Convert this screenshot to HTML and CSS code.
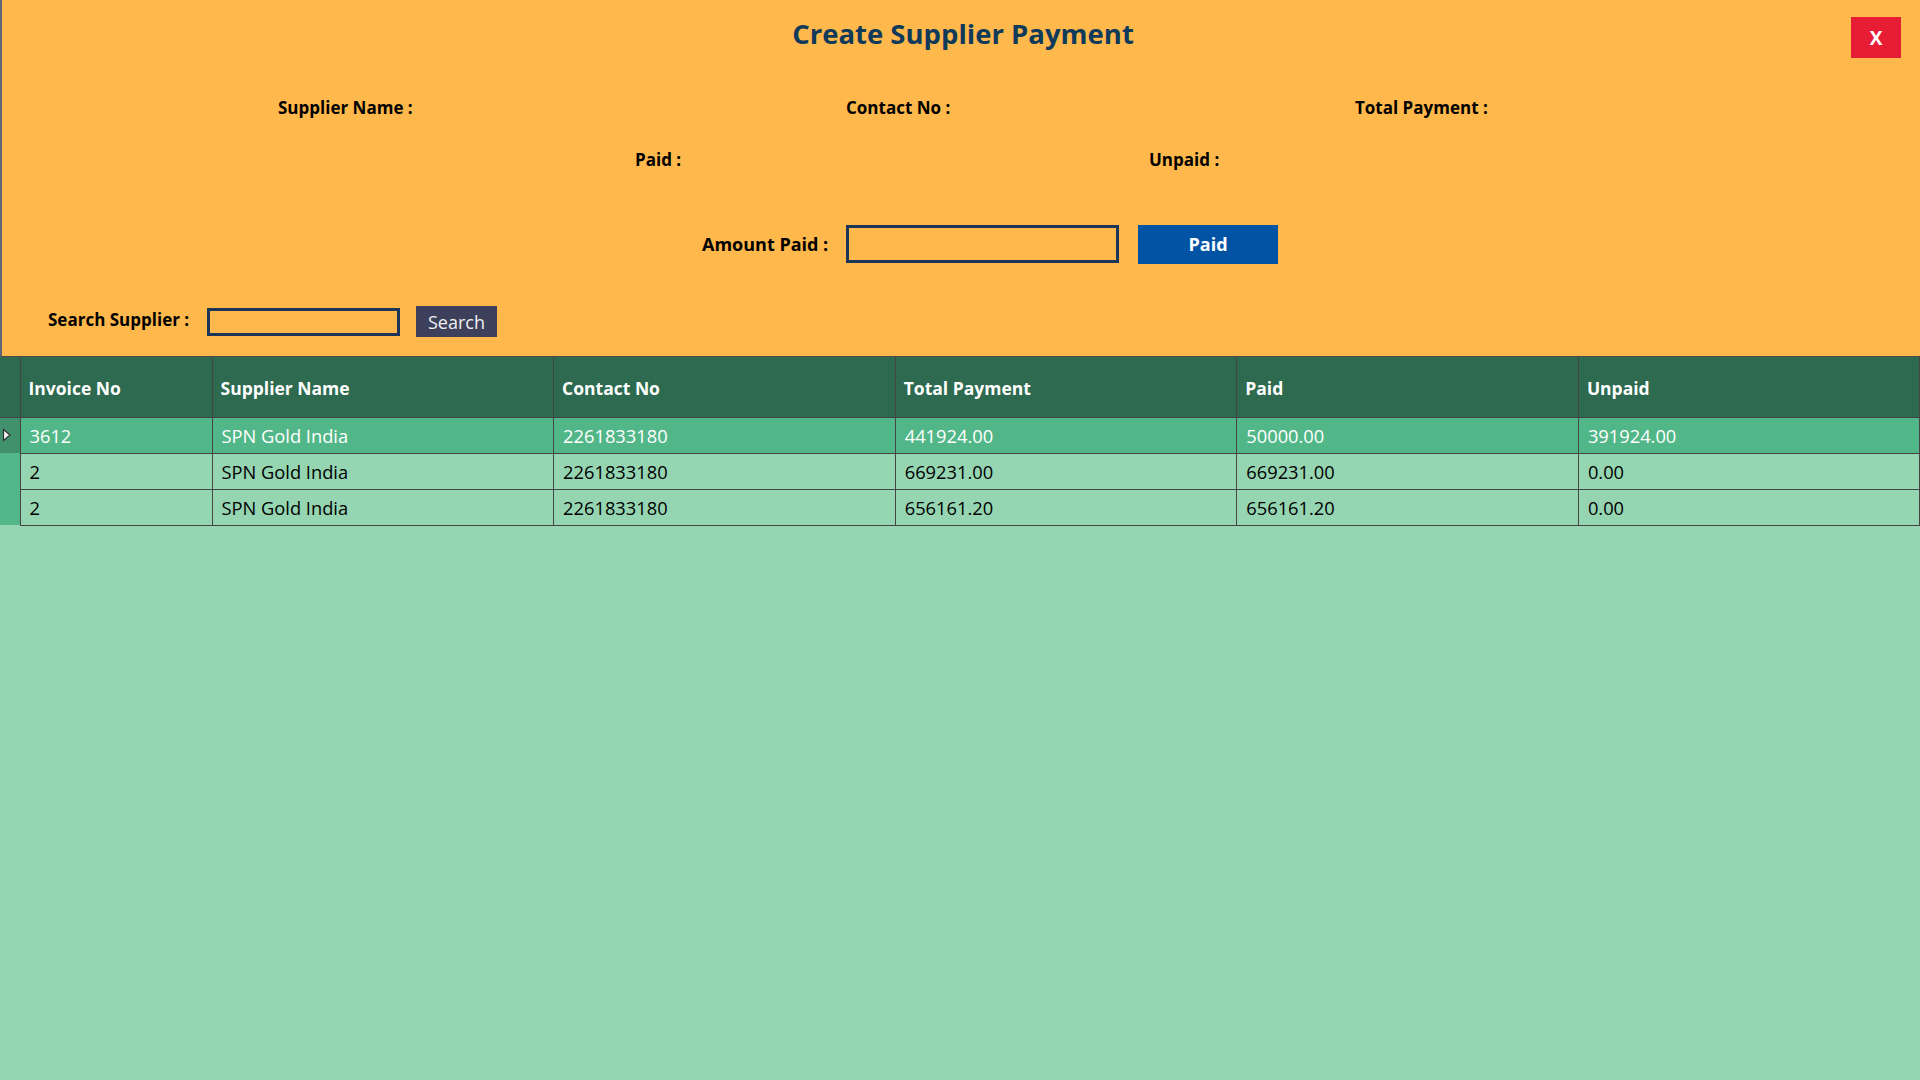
FILE: index.html
```html
<!DOCTYPE html>
<html lang="en">
<head>
<meta charset="utf-8">
<title>Create Supplier Payment</title>
<link rel="stylesheet" href="styles.css">
</head>
<body>
<div class="page">
  <section class="top">
    <h1 class="title">Create Supplier Payment</h1>
    <button class="close" type="button">X</button>
    <div class="info info-1">
      <span class="lbl l-supplier">Supplier Name :</span>
      <span class="lbl l-contact">Contact No :</span>
      <span class="lbl l-total">Total Payment :</span>
    </div>
    <div class="info info-2">
      <span class="lbl l-paid">Paid :</span>
      <span class="lbl l-unpaid">Unpaid :</span>
    </div>
    <div class="amount">
      <span class="lbl">Amount Paid :</span>
      <input class="amount-input" type="text">
      <button class="paid-btn" type="button">Paid</button>
    </div>
    <div class="search">
      <span class="lbl">Search Supplier :</span>
      <input class="search-input" type="text">
      <button class="search-btn" type="button">Search</button>
    </div>
  </section>
  <table class="grid">
    <colgroup>
      <col class="c-rh"><col class="c-1"><col class="c-n"><col class="c-n"><col class="c-n"><col class="c-n"><col class="c-n">
    </colgroup>
    <thead>
      <tr>
        <th class="rh"></th>
        <th>Invoice No</th>
        <th>Supplier Name</th>
        <th>Contact No</th>
        <th>Total Payment</th>
        <th>Paid</th>
        <th>Unpaid</th>
      </tr>
    </thead>
    <tbody>
      <tr class="sel">
        <td class="rh"><svg class="arrow" width="10" height="14" viewBox="0 0 10 14"><polygon points="1.5,1.5 8,7 1.5,12.5" fill="#f4f4f4" stroke="#333333" stroke-width="1.2" stroke-linejoin="miter"/></svg></td>
        <td>3612</td><td>SPN Gold India</td><td>2261833180</td><td>441924.00</td><td>50000.00</td><td>391924.00</td>
      </tr>
      <tr>
        <td class="rh"></td>
        <td>2</td><td>SPN Gold India</td><td>2261833180</td><td>669231.00</td><td>669231.00</td><td>0.00</td>
      </tr>
      <tr>
        <td class="rh"></td>
        <td>2</td><td>SPN Gold India</td><td>2261833180</td><td>656161.20</td><td>656161.20</td><td>0.00</td>
      </tr>
    </tbody>
  </table>
</div>
</body>
</html>
```
FILE: styles.css
```css
* { box-sizing: border-box; }
html, body { margin: 0; padding: 0; }
body {
  width: 1920px;
  height: 1080px;
  overflow: hidden;
  background: #95d5b2;
  font-family: "Open Sans", "Noto Sans", sans-serif;
}
.page { width: 1920px; height: 1080px; }
.top {
  position: relative;
  height: 357px;
  background: #ffb84c;
  border-left: 2px solid #5d6676;
  border-bottom: 1px solid #4a4a4a;
  display: flex;
  flex-direction: column;
}
.title {
  margin: 0;
  height: 68px;
  line-height: 68px;
  text-align: center;
  font-size: 27.5px;
  font-weight: 700;
  color: #0f3a5a;
  padding-left: 4px;
}
.close {
  position: absolute;
  top: 17px;
  right: 19px;
  width: 50px;
  height: 41px;
  border: 0;
  background: #e71d36;
  color: #fff;
  font-family: "Open Sans", sans-serif;
  font-weight: 700;
  font-size: 19px;
  padding: 0;
}
.lbl {
  font-weight: 700;
  font-size: 17px;
  color: #000;
  white-space: nowrap;
}
.info { display: flex; align-items: center; height: 40px; }
.info-1 { margin-top: 19px; }
.l-supplier { margin-left: 276px; width: 568px; }
.l-contact { width: 509px; }
.info-2 { margin-top: 12px; }
.l-paid { margin-left: 633px; width: 514px; }
.amount {
  display: flex;
  align-items: center;
  height: 40px;
  margin-top: 45px;
  padding-left: 700px;
}
.amount .lbl { width: 144px; font-size: 18px; }
.amount-input {
  width: 273px;
  height: 38px;
  border: 3px solid #1d3557;
  background: transparent;
  margin: 0;
}
.paid-btn {
  margin-left: 19px;
  width: 140px;
  height: 39px;
  border: 0;
  background: #0353a4;
  color: #fff;
  font-family: "Open Sans", sans-serif;
  font-weight: 700;
  font-size: 18px;
}
.search {
  display: flex;
  align-items: center;
  height: 31px;
  margin-top: 42px;
  padding-left: 46px;
}
.search .lbl { width: 159px; padding-bottom: 4px; }
.search-input {
  width: 193px;
  height: 28px;
  border: 3px solid #1d3557;
  background: transparent;
  margin: 0;
}
.search-btn {
  margin-left: 16px;
  width: 81px;
  height: 31px;
  border: 0;
  background: #3d405b;
  color: #f0f0f0;
  font-family: "Open Sans", sans-serif;
  font-size: 18px;
  padding: 0;
}
.grid {
  border-collapse: collapse;
  table-layout: fixed;
  width: 1920px;
}
.c-rh { width: 20px; }
.c-1 { width: 192px; }
.c-n { width: 341.6px; }
.grid th {
  height: 60px;
  background: #2d6a4f;
  color: #fff;
  font-weight: 700;
  font-size: 17.5px;
  text-align: left;
  padding: 2px 0 0 8px;
  border: 1px solid #454545;
  border-top: 0;
}
.grid th.rh { border-left: 0; padding: 0; }
.grid td {
  height: 36px;
  background: #95d5b2;
  color: #000;
  font-size: 18.3px;
  padding: 1px 0 0 9px;
  border: 1px solid #454545;
  border-top: 0;
  white-space: nowrap;
}
.grid tr.sel td { background: #52b788; color: #fff; }
.grid td.rh {
  background: #52b788;
  border: 0;
  padding: 0 0 0 2px;
}
.grid tr.sel td.rh { background: #40916c; }
.arrow { display: block; }
```
